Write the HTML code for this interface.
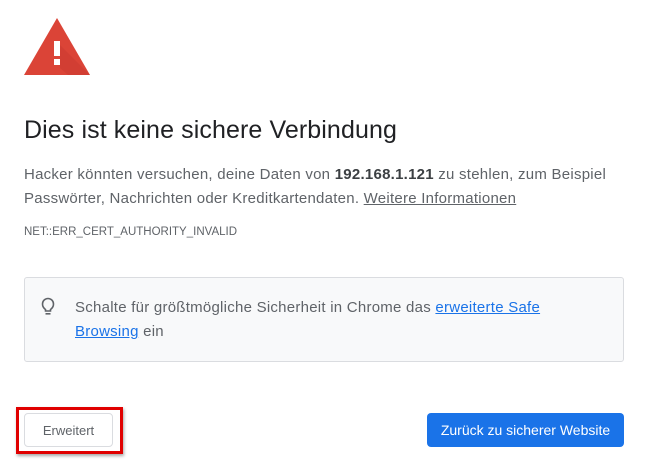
<!DOCTYPE html>
<html><head><meta charset="utf-8"><style>
body{margin:0;background:#fff;font-family:"Liberation Sans",sans-serif;width:654px;height:470px;position:relative;overflow:hidden}
.a{position:absolute;white-space:nowrap}
h1{position:absolute;left:24px;top:116px;margin:0;font-weight:normal;font-size:25px;color:#202124;letter-spacing:0.1px}
.p{font-size:15px;color:#5f6368;letter-spacing:0.25px;left:24px}
a{color:#1a73e8;text-decoration:underline}
.box{position:absolute;left:24px;top:277px;width:598px;height:83px;background:#f8f9fa;border:1px solid #dadce0;border-radius:3px}
.btn1{position:absolute;left:24px;top:413px;width:89px;height:34px;border:1px solid #dadce0;border-radius:4px;background:#fff;box-sizing:border-box;font-size:13px;color:#5f6368;text-align:center;line-height:34px}
.red{position:absolute;left:16px;top:407px;width:101px;height:41px;border:3px solid #e00000;box-shadow:1px 2px 3px rgba(0,0,0,.35)}
.btn2{position:absolute;left:427px;top:413px;width:197px;height:34px;background:#1a73e8;border-radius:4px;color:#fff;font-size:14px;text-align:center;line-height:34px}
</style></head><body>
<svg class="a" style="left:24px;top:18px" width="66" height="58" viewBox="0 0 66 58">
<polygon points="33,0 66,57 0,57" fill="#db4437"/>
<polygon points="36,27 66,57 44,57 36,50" fill="#c5372c" opacity=".4"/>
<rect x="30" y="23" width="6" height="15" fill="#fff"/>
<rect x="30" y="41" width="6" height="6" fill="#fff"/>
</svg>
<h1>Dies ist keine sichere Verbindung</h1>
<div class="a p" style="top:166px">Hacker könnten versuchen, deine Daten von <b style="color:#3c4043">192.168.1.121</b> zu stehlen, zum Beispiel</div>
<div class="a p" style="top:190px">Passwörter, Nachrichten oder Kreditkartendaten. <a style="color:#5f6368">Weitere Informationen</a></div>
<div class="a" style="left:24px;top:226px;font-size:11.5px;color:#5f6368">NET::ERR_CERT_AUTHORITY_INVALID</div>
<div class="box"></div>
<svg class="a" style="left:41px;top:296px" width="14" height="20" viewBox="0 0 14 20"><path d="M4.5 13.5C2.5 12 1.5 10 1.5 8A5.5 5.5 0 0 1 12.5 8C12.5 10 11.5 12 9.5 13.5V15H4.5Z" fill="none" stroke="#5f6368" stroke-width="1.6"/><rect x="4.5" y="17" width="5" height="1.6" fill="#5f6368"/></svg>
<div class="a p" style="left:75px;top:299px;color:#5f6368">Schalte für größtmögliche Sicherheit in Chrome das <a>erweiterte Safe</a></div>
<div class="a p" style="left:75px;top:323px;color:#5f6368"><a>Browsing</a> ein</div>
<div class="red"></div>
<div class="btn1">Erweitert</div>
<div class="btn2">Zurück zu sicherer Website</div>
</body></html>
